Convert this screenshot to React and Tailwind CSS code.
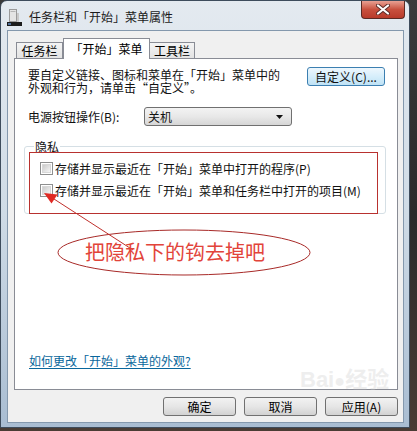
const font = { fontFamily: '"Noto Sans CJK SC", "Noto Sans", sans-serif' };

function WinButton({ children, className = "" }) {
  return (
    <div
      className={`flex items-center justify-center h-[19px] rounded-[3px] border border-[#707070] bg-linear-to-b from-[#f2f2f2] via-[#e6e6e6] to-[#d2d2d2] text-[12px] leading-[13px] text-black ${className}`}
    >
      {children}
    </div>
  );
}

function CheckBox({ label }) {
  return (
    <div className="flex items-center gap-[2px] h-[13px]">
      <div className="w-[13px] h-[13px] border border-[#8e8f8f] bg-white p-[1px]">
        <div className="w-full h-full bg-linear-to-br from-[#cbcbcb] to-[#f6f6f6] border border-[#d8d8d8]" />
      </div>
      <span className="text-[12px] leading-[13px] text-[#111]">{label}</span>
    </div>
  );
}

function TitleIcon() {
  return (
    <svg width="16" height="18" viewBox="0 0 16 18">
      <rect x="2.5" y="0.5" width="7" height="12" fill="#e4e4e4" stroke="#9a9a9a" />
      <rect x="3.5" y="2" width="5" height="1" fill="#b5b5b5" />
      <rect x="10" y="4" width="2" height="9" fill="#c9c9c9" />
      <rect x="0" y="13" width="15" height="4" fill="#1c1c1c" />
      <rect x="1" y="14" width="3" height="2" fill="#4f6f9a" />
    </svg>
  );
}

export default function App() {
  return (
    <div className="relative w-[417px] h-[431px] overflow-hidden bg-linear-to-b from-[#3a3a3a] via-[#2a2a2a] to-[#4a3c34]" style={font}>
      <div className="flex flex-col w-[410px] h-[428px] rounded-t-[7px] border border-[#3e4c5c] bg-linear-to-b from-[#e4eaf0] via-[#cfdbe6] to-[#a9bdd2]">
        {/* title bar */}
        <div className="flex items-start h-[29px]">
          <div className="ml-[6px] mt-[8px]">
            <TitleIcon />
          </div>
          <div className="ml-[6px] mt-[9px] text-[12px] leading-[14px] text-[#1b1b1b]">任务栏和「开始」菜单属性</div>
          <div className="ml-auto mr-[4px] w-[44px] h-[18px] rounded-b-[4px] border border-t-0 border-[#5a2a24] bg-linear-to-b from-[#e8a093] via-[#c8503e] to-[#b83a2a] flex items-center justify-center">
            <svg width="14" height="11" viewBox="0 0 14 11">
              <path d="M2 1.5 L12 9.5 M12 1.5 L2 9.5" stroke="#5b2c28" strokeWidth="4" strokeLinecap="round" />
              <path d="M2 1.5 L12 9.5 M12 1.5 L2 9.5" stroke="#ffffff" strokeWidth="2.2" strokeLinecap="round" />
            </svg>
          </div>
        </div>

        {/* client area */}
        <div className="flex flex-col flex-1 ml-[6px] mr-[5px] mb-[4px] border border-[#8498ad] bg-[#f0f0f0]">
          {/* tabs */}
          <div className="flex items-end pt-[6px] pl-[8px] h-[27px]">
            <div className="w-[47px] h-[16px] border border-b-0 border-[#898c95] bg-linear-to-b from-[#f4f4f4] to-[#e3e3e3] text-[12px] leading-[15px] text-center">
              任务栏
            </div>
            <div className="relative z-10 w-[87px] h-[21px] -mb-[1px] border border-b-0 border-[#898c95] bg-white text-[12px] leading-[19px] text-center">
              「开始」菜单
            </div>
            <div className="w-[45px] h-[16px] border border-b-0 border-l-0 border-[#898c95] bg-linear-to-b from-[#f4f4f4] to-[#e3e3e3] text-[12px] leading-[15px] text-center">
              工具栏
            </div>
          </div>

          {/* panel */}
          <div className="flex flex-col ml-[6px] mr-[5px] h-[332px] border border-[#898c95] bg-white text-[12px] text-[#111]">
            <div className="flex items-start justify-between pt-[8px] pl-[13px] pr-[12px]">
              <div className="mt-[1px] w-[256px] leading-[13px]">
                要自定义链接、图标和菜单在「开始」菜单中的外观和行为，请单击“自定义”。
              </div>
              <div className="w-[78px] h-[19px] rounded-[3px] border border-[#3c7fb1] bg-linear-to-b from-[#eef7fd] via-[#d6eefb] to-[#bfe2f5] flex items-center justify-center leading-[13px]">
                自定义(C)...
              </div>
            </div>

            <div className="flex items-center mt-[13px] pl-[13px]">
              <div className="w-[116px] leading-[13px]">电源按钮操作(B):</div>
              <div className="flex items-center w-[148px] h-[19px] rounded-[3px] border border-[#707070] bg-linear-to-b from-[#f3f3f3] via-[#e8e8e8] to-[#d6d6d6] pl-[3px] pr-[8px]">
                <span className="leading-[13px]">关机</span>
                <svg className="ml-auto" width="7" height="4" viewBox="0 0 7 4">
                  <path d="M0 0 H7 L3.5 4 Z" fill="#111" />
                </svg>
              </div>
            </div>

            <fieldset className="ml-[9px] mt-[14px] w-[362px] rounded-[3px] border border-[#d5dfe5] pt-[9px] pb-[16px]">
              <legend className="ml-[9px] px-[1px] leading-[13px]">隐私</legend>
              <div className="flex flex-col gap-[9px] pl-[15px]">
                <CheckBox label="存储并显示最近在「开始」菜单中打开的程序(P)" />
                <CheckBox label="存储并显示最近在「开始」菜单和任务栏中打开的项目(M)" />
              </div>
            </fieldset>

            <div className="mt-auto pl-[14px] pb-[19px]">
              <span className="leading-[13px] text-[#0a679c] underline underline-offset-2">如何更改「开始」菜单的外观?</span>
            </div>
          </div>

          {/* buttons */}
          <div className="flex justify-end gap-[8px] mt-[7px] pr-[5px]">
            <WinButton className="w-[73px]">确定</WinButton>
            <WinButton className="w-[73px]">取消</WinButton>
            <WinButton className="w-[73px]">应用(A)</WinButton>
          </div>
        </div>
      </div>

      {/* annotation overlay */}
      <svg className="absolute left-0 top-0 pointer-events-none" width="417" height="431" viewBox="0 0 417 431">
        <rect x="29.5" y="152.5" width="348" height="61" fill="none" stroke="#b8312f" strokeWidth="1" />
        <ellipse cx="184" cy="252.5" rx="126" ry="22.5" fill="none" stroke="#a82a28" strokeWidth="1" />
        <line x1="133" y1="250" x2="54" y2="199" stroke="#c0302c" strokeWidth="1" />
        <path d="M44 193 L57.5 194.5 L51.5 203.5 Z" fill="#e02a24" />
      </svg>
      <div className="absolute left-[85px] top-[239px] text-[20px] leading-[26px] text-[#e2443a] pointer-events-none">
        把隐私下的钩去掉吧
      </div>
      <div className="absolute left-[300px] top-[368px] text-[22px] leading-[24px] font-bold text-[#c8c8c8] opacity-30 pointer-events-none" style={{ fontFamily: '"Liberation Sans", "Noto Sans CJK SC", sans-serif' }}>
        Bai<span className="text-[18px]">●</span>经验
      </div>
    </div>
  );
}
